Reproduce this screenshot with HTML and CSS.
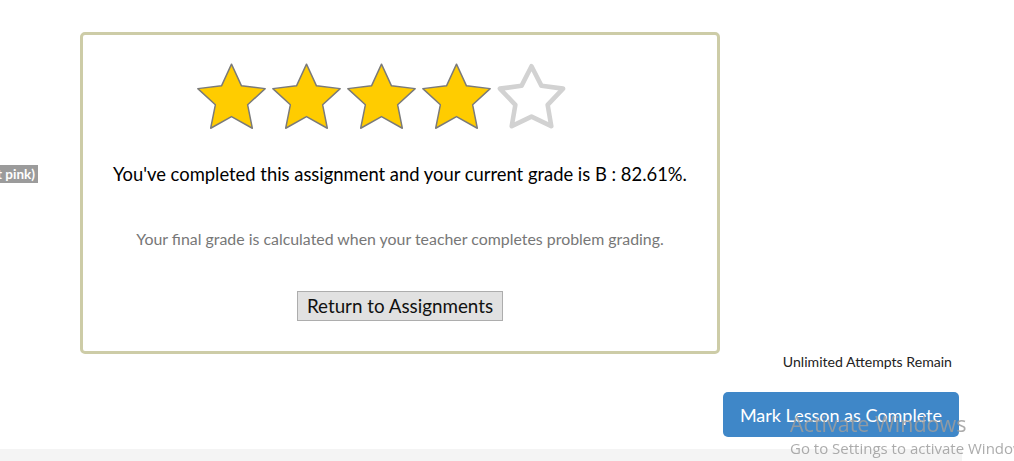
FILE: index.html
```html
<!DOCTYPE html>
<html>
<head>
<meta charset="utf-8">
<link rel="stylesheet" href="styles.css">
</head>
<body>
<div class="page">
  <div class="main">
    <aside class="side">
      <div class="tag-clip"><span class="tag">(light pink)</span></div>
    </aside>
    <section class="card">
      <div class="stars">
        <svg class="star" viewBox="0 0 72 68"><polygon class="full" points="36,2 45.59,22.81 68.33,25.49 51.5,41.03 55.99,63.51 36,52.32 16.01,63.51 20.5,41.03 3.67,25.49 26.41,22.81"/></svg>
        <svg class="star" viewBox="0 0 72 68"><polygon class="full" points="36,2 45.59,22.81 68.33,25.49 51.5,41.03 55.99,63.51 36,52.32 16.01,63.51 20.5,41.03 3.67,25.49 26.41,22.81"/></svg>
        <svg class="star" viewBox="0 0 72 68"><polygon class="full" points="36,2 45.59,22.81 68.33,25.49 51.5,41.03 55.99,63.51 36,52.32 16.01,63.51 20.5,41.03 3.67,25.49 26.41,22.81"/></svg>
        <svg class="star" viewBox="0 0 72 68"><polygon class="full" points="36,2 45.59,22.81 68.33,25.49 51.5,41.03 55.99,63.51 36,52.32 16.01,63.51 20.5,41.03 3.67,25.49 26.41,22.81"/></svg>
        <svg class="star" viewBox="0 0 72 68"><polygon class="empty" points="36,4 45.59,22.81 66.33,25.49 51.5,41.03 54.99,61.51 36,52.32 17.01,61.51 20.5,41.03 5.67,25.49 26.41,22.81"/></svg>
      </div>
      <p class="grade">You've completed this assignment and your current grade is B : 82.61%.</p>
      <p class="note">Your final grade is calculated when your teacher completes problem grading.</p>
      <div class="return-row"><button class="return">Return to Assignments</button></div>
    </section>
  </div>
  <div class="status">Unlimited Attempts Remain</div>
  <div class="actions"><button class="complete">Mark Lesson as Complete</button></div>
  <footer class="strip"></footer>
</div>
<div class="watermark">
  <div class="wm-title">Activate Windows</div>
  <div class="wm-sub">Go to Settings to activate Windows.</div>
</div>
</body>
</html>
```
FILE: styles.css
```css
html, body {
  margin: 0;
  padding: 0;
  background: #ffffff;
  overflow: hidden;
}
body {
  font-family: Lato, "Liberation Sans", sans-serif;
  color: #111;
}
.page {
  padding-top: 32px;
}
.main {
  display: flex;
}
.side {
  width: 80px;
  flex: none;
  padding-top: 133px;
}
.tag-clip {
  width: 38px;
  display: flex;
  justify-content: flex-end;
  overflow: hidden;
}
.tag {
  flex: none;
  white-space: nowrap;
  background: #9b9b9b;
  color: #fff;
  font-weight: bold;
  font-size: 13.5px;
  line-height: 18px;
  height: 18px;
  padding: 0 3px 0 4px;
}
.card {
  width: 640px;
  height: 322px;
  box-sizing: border-box;
  border: 3px solid #cdcca7;
  border-radius: 5px;
  padding-top: 27px;
}
.stars {
  display: flex;
  padding-left: 111px;
  height: 71px;
}
.star {
  width: 75px;
  height: 71px;
  flex: none;
}
.star .full {
  fill: #ffcc00;
  stroke: #7a7a7a;
  stroke-width: 1.4;
  stroke-linejoin: round;
}
.star .empty {
  fill: #ffffff;
  stroke: #d2d2d2;
  stroke-width: 4.4;
  stroke-linejoin: round;
}
.grade {
  margin: 30px 0 0;
  text-align: center;
  font-size: 18.4px;
  line-height: 22px;
  color: #000;
}
.note {
  margin: 45px 0 0;
  text-align: center;
  font-size: 15.9px;
  line-height: 18px;
  color: #777;
}
.return-row {
  margin-top: 43px;
  display: flex;
  justify-content: center;
}
.return {
  font-family: Lato, "Liberation Sans", sans-serif;
  font-size: 18.8px;
  line-height: 28px;
  height: 30px;
  padding: 0 9px;
  background: #e1e1e1;
  border: 1px solid #adadad;
  border-radius: 0;
  color: #111;
}
.status {
  width: 952px;
  text-align: right;
  font-size: 14.1px;
  line-height: 16px;
  color: #222;
}
.actions {
  width: 959px;
  margin-top: 22px;
  display: flex;
  justify-content: flex-end;
}
.complete {
  font-family: Lato, "Liberation Sans", sans-serif;
  font-size: 18px;
  height: 45px;
  padding: 0 17px;
  border: none;
  border-radius: 5px;
  background: #3f87c8;
  color: #fff;
}
.strip {
  margin-top: 12px;
  width: 962px;
  height: 20px;
  background: #f4f4f4;
}
.watermark {
  position: fixed;
  left: 790px;
  top: 410px;
  font-family: "Open Sans", "Noto Sans", sans-serif;
  color: rgba(158, 158, 158, 0.85);
  white-space: nowrap;
  pointer-events: none;
}
.wm-title {
  font-size: 21.5px;
  line-height: 28px;
}
.wm-sub {
  font-size: 15px;
  line-height: 20px;
}
```
